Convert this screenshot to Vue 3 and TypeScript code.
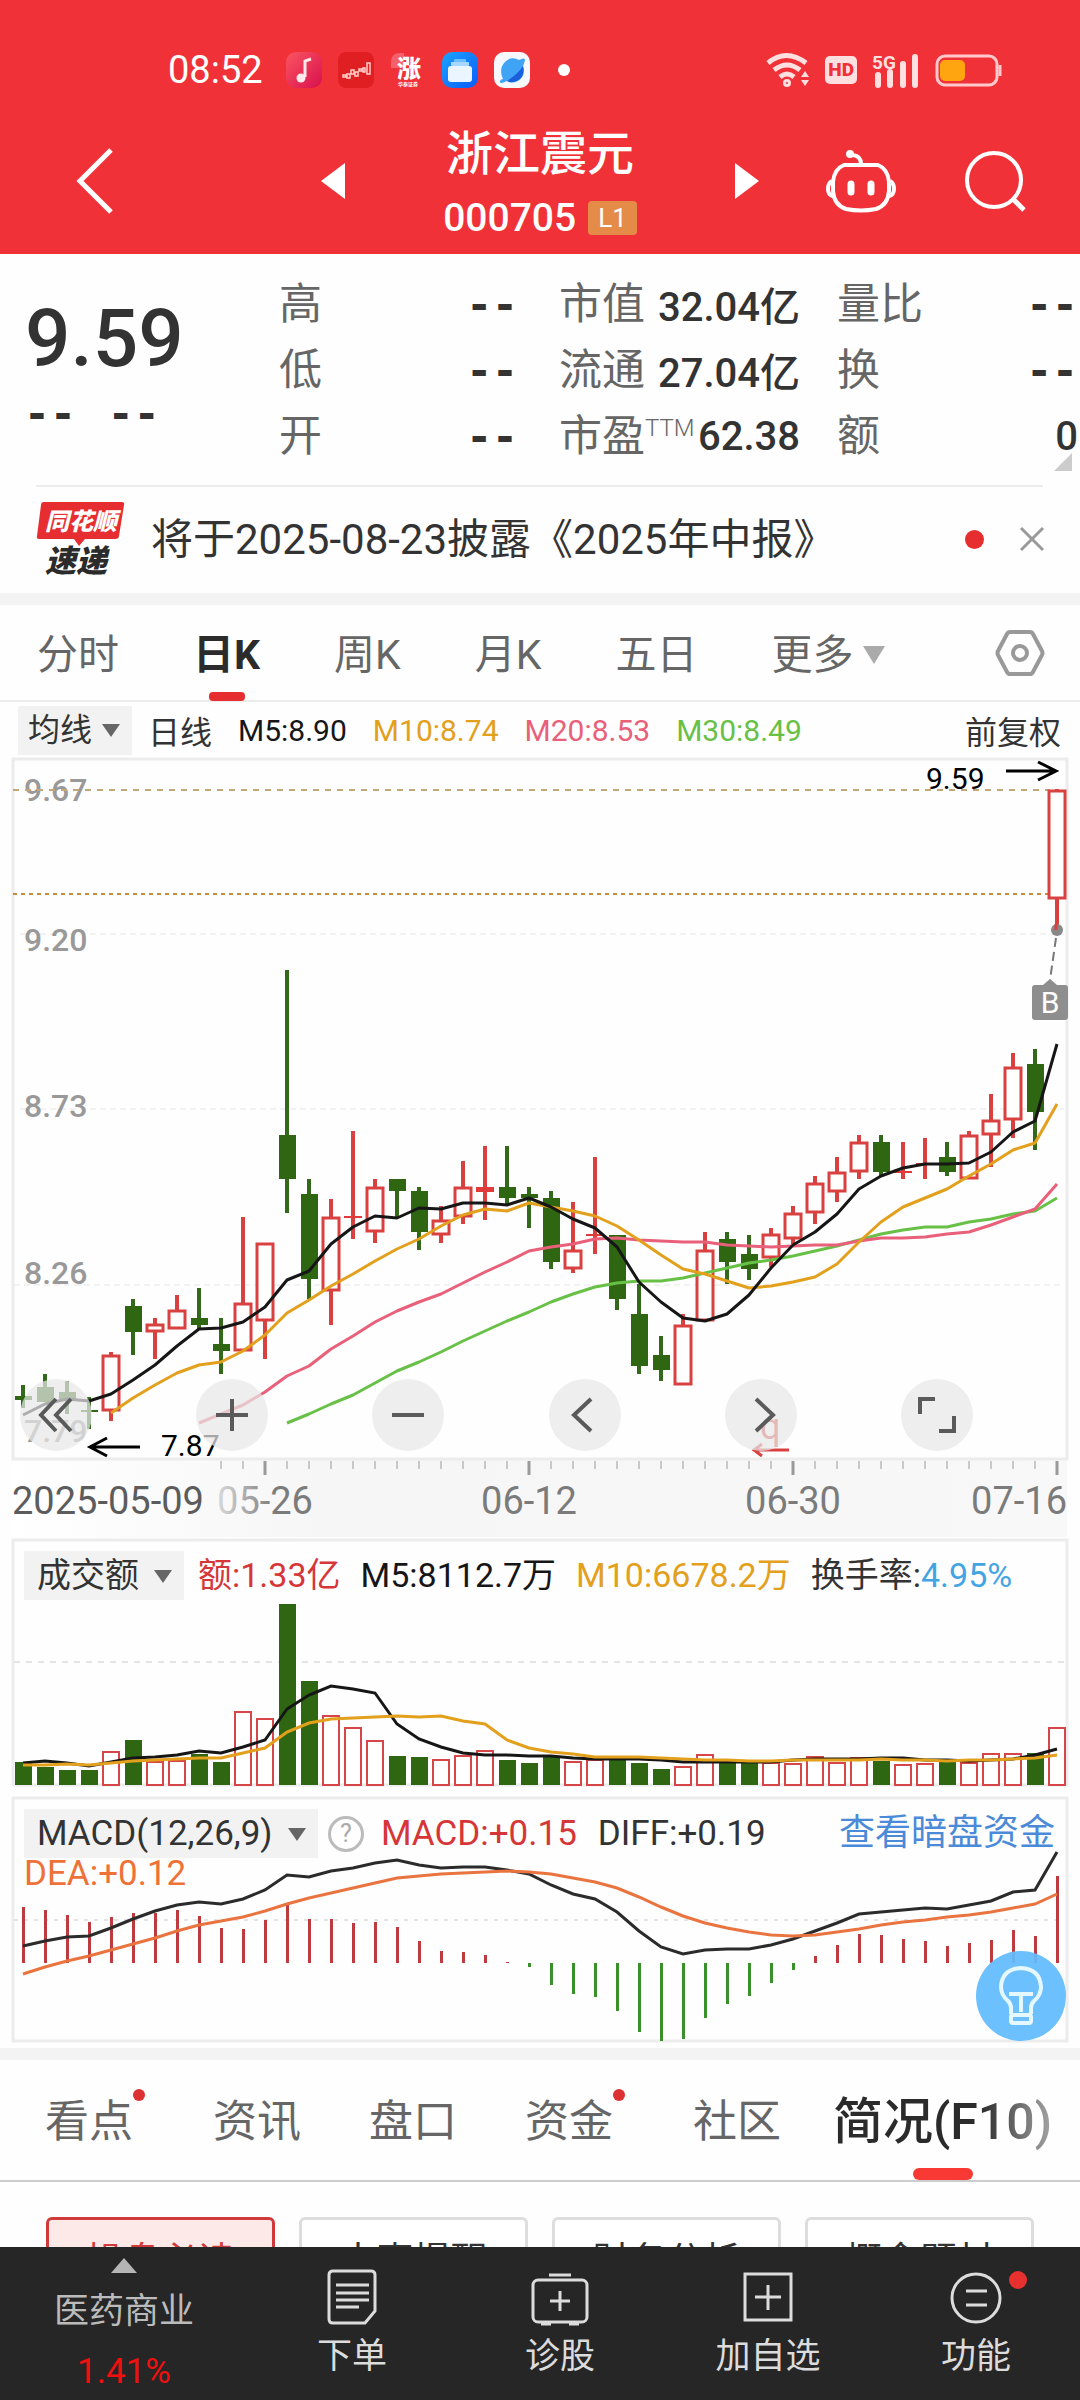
<script setup lang="ts">
interface Candle {
  high: number
  top: number
  bottom: number
  low: number
  up: boolean
}

const STEP = 22
const FIRST = 23
const xAt = (i: number): number => FIRST + i * STEP

const linePoints = (values: number[], start = 0): string =>
  values.map((v, i) => `${xAt(start + i)},${v}`).join(' ')

const parseCandle = (row: string): Candle => {
  const [kind, high, top, bottom, low] = row.split(' ')
  return { up: kind === 'r', high: +high, top: +top, bottom: +bottom, low: +low }
}

const candles: Candle[] = [
  'g 627 638 642 650', 'g 616 629 644 644', 'g 623 634 641 656', 'g 639 652 654 671',
  'r 594 597 653 663', 'g 541 548 574 597', 'r 560 566 574 601', 'r 537 552 571 571',
  'g 530 560 567 571', 'g 560 586 593 616', 'r 459 545 593 593', 'r 485 485 563 601',
  'g 212 377 421 455', 'g 421 436 521 541', 'r 441 459 533 567', 'r 373 458 460 481',
  'r 421 429 474 485', 'g 421 421 433 460', 'g 429 433 474 492', 'r 448 462 477 485',
  'r 403 429 459 466', 'r 388 429 434 462', 'g 388 429 440 447', 'g 429 436 440 470',
  'g 433 440 504 511', 'r 444 492 511 515', 'r 399 476 478 496', 'g 477 477 541 552',
  'g 526 556 608 616', 'g 578 597 612 623', 'r 556 567 627 627', 'r 474 492 563 563',
  'g 474 481 504 526', 'g 477 496 511 522', 'r 470 476 500 509', 'r 448 455 481 486',
  'r 418 425 455 466', 'r 399 414 434 444', 'r 377 384 414 421', 'g 377 384 414 418',
  'r 384 413 415 421', 'r 380 405 407 421', 'g 384 399 414 418', 'r 373 377 421 421',
  'r 336 362 377 409', 'r 295 309 362 380', 'g 291 306 354 392', 'r 31 32 141 171',
].map(parseCandle)

const isFlat = (c: Candle): boolean => c.bottom - c.top < 7

const ma5 = linePoints([
  657, 646, 641, 643, 636, 622, 607, 588, 571, 570, 564, 549, 522, 513, 486, 469, 458, 460, 450, 451,
  445, 445, 447, 440, 449, 461, 470, 489, 524, 544, 560, 563, 556, 537, 510, 487, 474, 456, 431, 418,
  410, 406, 406, 405, 394, 374, 363, 286,
])
const ma10 = linePoints([
  655, 640, 627, 615, 607, 604, 593, 577, 555, 542, 528, 516, 503, 491, 481, 468, 457, 451, 453, 445,
  449, 453, 458, 468, 482, 497, 511, 516, 523, 530, 528, 524, 519, 506, 484, 464, 449, 440, 431, 418,
  406, 392, 385, 346,
], 4)
const ma20 = linePoints([
  665, 656, 647, 634, 618, 608, 591, 578, 564, 553, 544, 536, 525, 514, 504, 493, 489, 486, 481, 480,
  482, 483, 484, 484, 487, 488, 489, 488, 487, 487, 483, 480, 480, 479, 476, 474, 467, 459, 451, 426,
], 8)
const ma30 = linePoints([
  665, 656, 646, 637, 625, 613, 604, 594, 583, 573, 563, 554, 544, 536, 529, 525, 523, 523, 520, 515,
  510, 505, 502, 498, 493, 488, 482, 476, 472, 469, 469, 464, 461, 456, 453, 440,
], 12)

const volumes: number[] = [
  23, 18, 15, 15, 34, 45, 24, 25, 31, 23, 74, 67, 181, 104, 70, 58, 45, 29, 28, 26, 30, 35, 25, 22,
  28, 24, 26, 26, 22, 16, 19, 31, 23, 23, 23, 22, 29, 23, 28, 24, 21, 22, 23, 23, 32, 32, 32, 58,
]
const vol5 = linePoints([
  224, 222, 224, 227, 223, 219, 218, 216, 212, 214, 208, 201, 170, 156, 147, 150, 154, 185, 200, 208,
  214, 216, 216, 217, 217, 219, 220, 220, 220, 221, 223, 223, 223, 223, 223, 221, 220, 220, 220, 219,
  219, 221, 221, 222, 221, 220, 216, 210,
])
const vol10 = linePoints([
  226, 226, 225, 226, 224, 222, 221, 220, 219, 219, 214, 209, 193, 184, 180, 179, 178, 177, 178, 177,
  182, 185, 201, 209, 213, 215, 218, 218, 218, 219, 220, 221, 221, 222, 222, 221, 221, 221, 221, 220,
  221, 221, 222, 221, 221, 220, 219, 216,
])

const macd: number[] = [
  56, 53, 48, 41, 46, 50, 50, 53, 47, 35, 34, 43, 58, 44, 44, 40, 41, 36, 22, 12, 11, 8, 1, -4,
  -22, -31, -34, -48, -69, -78, -76, -55, -41, -33, -20, -7, 7, 18, 29, 28, 24, 22, 17, 20, 23, 33, 27, 87,
]
const diff = linePoints([
  149, 144, 140, 139, 131, 122, 114, 108, 105, 107, 102, 93, 78, 80, 74, 71, 66, 63, 68, 71, 70, 70,
  73, 77, 88, 97, 102, 115, 134, 150, 157, 153, 152, 152, 148, 142, 134, 126, 117, 115, 113, 111, 112,
  108, 104, 95, 93, 55,
])
const dea = linePoints([
  177, 170, 164, 159, 153, 147, 141, 134, 128, 124, 120, 114, 107, 101, 96, 91, 86, 81, 79, 77, 76, 75,
  74, 75, 77, 81, 85, 91, 100, 110, 119, 126, 131, 135, 138, 139, 138, 135, 132, 128, 125, 123, 120,
  118, 115, 111, 107, 97,
])

const ticks = Array.from({ length: 39 }, (_, k) => k + 9)
const isMajor = (i: number): boolean => i % 12 === 11

const priceLabels = [
  { y: 43, text: '9.67' },
  { y: 193, text: '9.20' },
  { y: 359, text: '8.73' },
  { y: 526, text: '8.26' },
  { y: 684, text: '7.79' },
]

const stats = [
  [{ name: '高', value: '--' }, { name: '低', value: '--' }, { name: '开', value: '--' }],
  [{ name: '市值', value: '32.04亿' }, { name: '流通', value: '27.04亿' }, { name: '市盈', sup: 'TTM', value: '62.38' }],
  [{ name: '量比', value: '--' }, { name: '换', value: '--' }, { name: '额', value: '0' }],
] as { name: string; value: string; sup?: string }[][]

const periods = ['分时', '日K', '周K', '月K', '五日']

const sections = [
  { name: '看点', dot: true },
  { name: '资讯' },
  { name: '盘口' },
  { name: '资金', dot: true },
  { name: '社区' },
  { name: '简况(F10)', active: true },
] as { name: string; dot?: boolean; active?: boolean }[]

const shortcuts = ['操盘必读', '大事提醒', '财务分析', '概念题材']
</script>

<template>
  <div class="page">
    <header class="top">
      <div class="status">
        <span class="clock">08:52</span>
        <div class="apps">
          <svg width="36" height="36" viewBox="0 0 36 36">
            <defs>
              <linearGradient id="music" x1="0" y1="0" x2="1" y2="1">
                <stop offset="0" stop-color="#fb5560" />
                <stop offset="1" stop-color="#d8104f" />
              </linearGradient>
              <linearGradient id="files" x1="0" y1="0" x2="1" y2="1">
                <stop offset="0" stop-color="#1aa3ff" />
                <stop offset="1" stop-color="#0a5cff" />
              </linearGradient>
            </defs>
            <rect width="36" height="36" rx="10" fill="url(#music)" />
            <path d="M19 25V9l6-2" fill="none" stroke="#ffe9ea" stroke-width="3" />
            <circle cx="15" cy="26" r="4.500" fill="#ffe9ea" />
          </svg>
          <svg width="36" height="36" viewBox="0 0 36 36">
            <rect width="36" height="36" rx="8" fill="#e01f22" />
            <g fill="none" stroke="#ffd2cc" stroke-width="1.500">
              <rect x="5" y="23" width="3" height="2" /><rect x="9" y="22" width="3" height="4" />
              <rect x="13" y="18" width="3" height="4" /><rect x="17" y="20" width="3" height="4" />
              <rect x="21" y="17" width="3" height="2" /><rect x="25" y="16" width="2" height="4" />
              <rect x="29" y="11" width="3" height="11" />
            </g>
          </svg>
          <svg width="36" height="36" viewBox="0 0 36 36">
            <path d="M1 16V10Q1 1 10 1H14V16Z" fill="#f5616a" />
            <text x="7" y="25" font-size="24" font-weight="900" fill="#fff">涨</text>
            <text x="8" y="34" font-size="5" font-weight="700" fill="#fff">华泰证券</text>
          </svg>
          <svg width="36" height="36" viewBox="0 0 36 36">
            <rect width="36" height="36" rx="10" fill="url(#files)" />
            <rect x="12" y="7" width="12" height="4" rx="1" fill="#6cc0ff" />
            <rect x="9" y="10" width="18" height="4" rx="1" fill="#a6d8ff" />
            <rect x="6" y="14" width="24" height="16" rx="3" fill="#eaf5ff" />
          </svg>
          <svg width="36" height="36" viewBox="0 0 36 36">
            <rect width="36" height="36" rx="10" fill="#f6f8fb" />
            <path d="M9 27Q4 16 12 9Q18 4 25 8Q31 5 31 8Q30 12 29 14Q32 24 24 29Q17 32 13 29Q5 33 6 29Q7 27 9 27Z" fill="#3fa4f5" />
            <path d="M29 14Q24 22 13 29Q20 32 26 27Q31 22 29 14Z" fill="#1a5fdc" />
          </svg>
          <i class="more-dot"></i>
        </div>
        <div class="signals">
          <svg width="44" height="36" viewBox="0 0 44 36" fill="none" stroke="#ffdfe0" stroke-width="5">
            <path d="M2 11Q20-4 40 11M8 18Q21 8 34 18M14 25Q21 19 28 25" />
            <circle cx="21" cy="31" r="1.500" />
            <path d="M35 25l4-6 4 6zM35 28l4 6 4-6z" fill="#ffdfe0" stroke="none" />
          </svg>
          <span class="hd">HD</span>
          <svg width="48" height="36" viewBox="0 0 48 36">
            <text x="0" y="17" font-size="19" font-weight="700" fill="#ffdfe0">5G</text>
            <path d="M6 33V23M18 33V20M31 33V12M43 33V5" stroke="#ffdfe0" stroke-width="6" stroke-linecap="round" />
          </svg>
          <svg width="68" height="36" viewBox="0 0 68 36">
            <rect x="2" y="4" width="60" height="29" rx="8" fill="none" stroke="#ffc9cb" stroke-width="3" />
            <rect x="5" y="8" width="25" height="21" rx="5" fill="#ffa50f" />
            <path d="M65 13v11" stroke="#ffc9cb" stroke-width="3" />
          </svg>
        </div>
      </div>
      <nav class="title-bar">
        <div class="side-left">
          <button aria-label="返回">
            <svg width="38" height="66" viewBox="0 0 38 66"><path d="M35 2L4 33L35 64" fill="none" stroke="#fff" stroke-width="5" /></svg>
          </button>
          <button aria-label="上一只"><svg width="24" height="36" viewBox="0 0 24 36"><path d="M24 0V36L0 18Z" fill="#fff" /></svg></button>
        </div>
        <div class="stock">
          <h1>浙江震元</h1>
          <p><span>000705</span><b>L1</b></p>
        </div>
        <div class="side-right">
          <button aria-label="下一只"><svg width="24" height="36" viewBox="0 0 24 36"><path d="M0 0V36L24 18Z" fill="#fff" /></svg></button>
          <button class="robot" aria-label="智能助手">
            <svg width="70" height="64" viewBox="0 0 70 64" fill="none" stroke="#fff" stroke-width="4">
              <path d="M35 15Q35 7 27 6" stroke-width="4" />
              <circle cx="24" cy="5" r="3" fill="#fff" stroke-width="2" />
              <path d="M18 16H52Q62 20 63 33V42Q62 56 50 60Q35 63 20 60Q8 56 7 42V33Q8 20 18 16Z" />
              <path d="M6 32Q2 34 2 40Q2 46 7 47M64 32Q68 34 68 40Q68 46 63 47" />
              <path d="M25 35v8M45 35v8" stroke-width="7" stroke-linecap="round" />
            </svg>
          </button>
          <button class="search" aria-label="搜索">
            <svg width="62" height="62" viewBox="0 0 62 62" fill="none" stroke="#fff" stroke-width="4">
              <circle cx="30" cy="30" r="27" /><path d="M49 49L60 60" stroke-width="5" />
            </svg>
          </button>
        </div>
      </nav>
    </header>

    <main>
      <section class="quote">
        <div class="price">
          <strong>9.59</strong>
          <p class="dashes"><span>--</span><span>--</span></p>
        </div>
        <dl v-for="(col, c) in stats" :key="c">
          <div v-for="s in col" :key="s.name">
            <dt>{{ s.name }}<sup v-if="s.sup">{{ s.sup }}</sup></dt>
            <dd :class="{ dashes: s.value === '--' }">{{ s.value }}</dd>
          </div>
        </dl>
        <i class="corner"></i>
      </section>

      <section class="notice">
        <svg class="logo" width="90" height="76" viewBox="0 0 90 76">
          <path d="M7 1H86Q89 1 88 4L83 35Q83 38 79 38H49L43 45L38 38H3Q0 38 1 35L5 4Q5 1 8 1Z" fill="#e62e30" />
          <text x="9" y="29" font-size="24" font-weight="900" font-style="italic" fill="#fff">同花顺</text>
          <text x="9" y="71" font-size="31" font-weight="900" font-style="italic" fill="#2b2b2b">速递</text>
        </svg>
        <a href="#">将于2025-08-23披露《2025年中报》</a>
        <i class="red-dot"></i>
        <button aria-label="关闭"><svg width="26" height="26" viewBox="0 0 26 26"><path d="M2 2L24 24M24 2L2 24" stroke="#999" stroke-width="3" /></svg></button>
      </section>

      <nav class="periods">
        <button v-for="p in periods" :key="p" :class="{ on: p === '日K' }">{{ p }}</button>
        <button class="more" aria-haspopup="true">更多<i class="caret light"></i></button>
        <button class="gear" aria-label="设置">
          <svg width="50" height="48" viewBox="0 0 50 48" fill="none" stroke="#999" stroke-width="4">
            <path d="M15 3H35Q37 3 38 5L47 22Q48 24 47 26L38 43Q37 45 35 45H15Q13 45 12 43L3 26Q2 24 3 22L12 5Q13 3 15 3Z" />
            <circle cx="25" cy="24" r="7" />
          </svg>
        </button>
      </nav>

      <div class="ma-row">
        <label class="pick"><select aria-label="主图指标"><option>均线</option></select></label>
        <span class="dark">日线</span>
        <span class="m5">M5:8.90</span>
        <span class="m10">M10:8.74</span>
        <span class="m20">M20:8.53</span>
        <span class="m30">M30:8.49</span>
        <span class="adjust dark">前复权</span>
      </div>

      <section class="kline">
        <svg class="plot" viewBox="0 0 1080 781">
          <defs>
            <linearGradient id="band" x1="0" y1="0" x2="1" y2="0">
              <stop offset="0" stop-color="#fff" />
              <stop offset="0.300" stop-color="#f7f6f7" />
              <stop offset="1" stop-color="#f8f8f8" />
            </linearGradient>
            <linearGradient id="fade" gradientUnits="userSpaceOnUse" x1="215" y1="0" x2="275" y2="0">
              <stop offset="0" stop-color="#ddd" />
              <stop offset="1" stop-color="#7b7b7b" />
            </linearGradient>
          </defs>
          <rect x="13" y="702" width="1054" height="77" fill="url(#band)" />
          <rect x="13" y="1" width="1054" height="700" fill="#fefefe" stroke="#ececec" stroke-width="3" />
          <g fill="none" stroke="#e6e6e6" stroke-width="1" stroke-dasharray="6 4">
            <path d="M20 176H1064M20 351H1064M14 527H1064" />
          </g>
          <g font-size="32" font-weight="500" fill="#999">
            <text v-for="l in priceLabels" :key="l.text" x="24" :y="l.y">{{ l.text }}</text>
          </g>
          <path d="M13 32H1050" stroke="#c2a878" stroke-width="2" stroke-dasharray="6 6" />
          <path d="M13 136H1056" stroke="#c98b3c" stroke-width="2" stroke-dasharray="4 4" />

          <g v-for="(c, i) in candles" :key="i">
            <template v-if="c.up">
              <path :d="`M${xAt(i)} ${c.high}V${c.top}M${xAt(i)} ${c.bottom}V${c.low}`" stroke="#d94040" stroke-width="4" />
              <rect v-if="isFlat(c)" :x="xAt(i) - 9" :y="c.top" width="18" :height="c.bottom - c.top" fill="#e03a3a" />
              <rect v-else :x="xAt(i) - 8" :y="c.top + 1" width="16" :height="c.bottom - c.top - 2" fill="#fff" stroke="#d94040" stroke-width="3" />
            </template>
            <template v-else>
              <path :d="`M${xAt(i)} ${c.high}V${c.low}`" stroke="#33691a" stroke-width="4" />
              <rect :x="xAt(i) - 8" :y="c.top" width="17" :height="c.bottom - c.top" fill="#2e6612" />
            </template>
          </g>

          <g fill="none" stroke-width="3" stroke-linejoin="round">
            <polyline :points="ma30" stroke="#68c047" />
            <polyline :points="ma20" stroke="#e9607a" />
            <polyline :points="ma10" stroke="#e2a01c" />
            <polyline :points="ma5" stroke="#161616" />
          </g>

          <g font-size="30">
            <text x="926" y="31">9.59</text>
            <text x="161" y="698">7.87</text>
          </g>
          <path d="M1006 13H1056M1038 4L1056 13L1038 22M140 689H90M107 680L90 689L107 698" fill="none" stroke="#000" stroke-width="3" />

          <circle cx="1057" cy="172" r="6" fill="#888" />
          <path d="M1056 166V172" stroke="#d94040" stroke-width="3" />
          <path d="M1056 180L1050 222" stroke="#777" stroke-width="2" stroke-dasharray="9 5" />
          <path d="M1043 227L1050 221L1057 227H1065Q1068 227 1068 230V259Q1068 262 1065 262H1035Q1032 262 1032 259V230Q1032 227 1035 227Z" fill="#8e8e8e" />
          <text x="1050" y="255" font-size="30" text-anchor="middle" fill="#fff">B</text>

          <text x="760" y="681" font-size="36" fill="#d94040">q</text>
          <path d="M789 692H754M762 686L754 692L762 698" fill="none" stroke="#d94040" stroke-width="3" />

          <g stroke="#9a9a9a">
            <path v-for="i in ticks" :key="i" :d="`M${xAt(i)} 703V${isMajor(i) ? 717 : 711}`" :stroke-width="isMajor(i) ? 3 : 1" />
          </g>
          <g font-size="38" fill="#7b7b7b">
            <text x="12" y="756" fill="#5c5c5c">2025-05-09</text>
            <text x="265" y="756" text-anchor="middle" fill="url(#fade)">05-26</text>
            <text x="529" y="756" text-anchor="middle">06-12</text>
            <text x="793" y="756" text-anchor="middle">06-30</text>
            <text x="1067" y="756" text-anchor="end">07-16</text>
          </g>
        </svg>
        <div class="tools">
          <button aria-label="最早"><svg width="34" height="34" viewBox="0 0 34 34"><path d="M17 1L2 17L17 33M32 1L17 17L32 33" /></svg></button>
          <button aria-label="放大"><svg width="34" height="34" viewBox="0 0 34 34"><path d="M1 17H33M17 1V33" /></svg></button>
          <button aria-label="缩小"><svg width="34" height="34" viewBox="0 0 34 34"><path d="M1 17H33" /></svg></button>
          <button aria-label="左移"><svg width="34" height="34" viewBox="0 0 34 34"><path d="M23 1L6 17L23 33" /></svg></button>
          <button aria-label="右移"><svg width="34" height="34" viewBox="0 0 34 34"><path d="M12 1L29 17L12 33" /></svg></button>
          <button aria-label="全屏"><svg width="38" height="38" viewBox="0 0 38 38"><path d="M2 18V3H17M36 20V35H21" /></svg></button>
        </div>
      </section>

      <section class="panel volume">
        <svg class="plot" viewBox="0 0 1080 248">
          <rect x="13" y="1" width="1054" height="245" fill="none" stroke="#ececec" stroke-width="3" />
          <path d="M14 123H1064" stroke="#e4e4e4" stroke-width="2" stroke-dasharray="6 6" />
          <g v-for="(v, i) in volumes" :key="i">
            <rect v-if="candles[i].up" :x="xAt(i) - 8" :y="247 - v" width="16" :height="v - 1" fill="#fff" stroke="#d64547" stroke-width="2" />
            <rect v-else :x="xAt(i) - 8" :y="246 - v" width="17" :height="v" fill="#2e6612" />
          </g>
          <polyline :points="vol5" fill="none" stroke="#161616" stroke-width="3" />
          <polyline :points="vol10" fill="none" stroke="#e2a01c" stroke-width="3" />
        </svg>
        <div class="legend">
          <label class="pick"><select aria-label="副图指标一"><option>成交额</option></select></label>
          <span class="red">额:1.33亿</span>
          <span class="m5">M5:8112.7万</span>
          <span class="m10">M10:6678.2万</span>
          <span class="dark">换手率:<em>4.95%</em></span>
        </div>
      </section>

      <section class="panel macd">
        <svg class="plot" viewBox="0 0 1080 246">
          <rect x="13" y="1" width="1054" height="243" fill="none" stroke="#ececec" stroke-width="3" />
          <path d="M14 123H1064" stroke="#e4e4e4" stroke-width="2" stroke-dasharray="4 6" />
          <path v-for="(m, i) in macd" :key="i" :d="`M${xAt(i) + 0.5} 166V${166 - m}`" :stroke="m > 0 ? '#bd3a3e' : '#3a902a'" stroke-width="3" />
          <polyline :points="diff" fill="none" stroke="#2b2b2b" stroke-width="3" />
          <polyline :points="dea" fill="none" stroke="#ea7440" stroke-width="3" />
        </svg>
        <div class="legend">
          <label class="pick"><select aria-label="副图指标二"><option>MACD(12,26,9)</option></select></label>
          <button class="help" aria-label="说明">?</button>
          <span class="red">MACD:+0.15</span>
          <span class="dark diff">DIFF:+0.19</span>
          <a href="#" class="dark-pool">查看暗盘资金</a>
          <span class="dea">DEA:+0.12</span>
        </div>
        <button class="bulb" aria-label="提示">
          <svg width="44" height="60" viewBox="0 0 44 60" fill="none" stroke="#e6f8ff" stroke-width="4">
            <path d="M12 48V42Q12 38 9 35Q2 29 2 21Q3 3 22 2Q41 3 42 21Q42 29 35 35Q32 38 32 42V48" />
            <path d="M10 28H34M22 28V46" />
            <rect x="12" y="49" width="20" height="8" rx="2" />
          </svg>
        </button>
      </section>

      <nav class="sections">
        <button v-for="s in sections" :key="s.name" :class="{ dotted: s.dot, active: s.active }">{{ s.name }}</button>
      </nav>

      <div class="shortcuts">
        <button v-for="(s, i) in shortcuts" :key="s" :class="{ on: i === 0 }">{{ s }}</button>
      </div>
    </main>

    <footer class="bar">
      <button class="industry">
        <i></i>
        <span>医药商业</span>
        <b>1.41%</b>
      </button>
      <button>
        <svg width="60" height="58" viewBox="0 0 60 58" fill="none" stroke="#dcdcdc" stroke-width="3">
          <path d="M11 2H49Q53 2 53 6V42L43 54H11Q7 54 7 50V6Q7 2 11 2Z" />
          <path d="M14 16H47M14 24H47M14 31H47M14 38H37" />
        </svg>
        <span>下单</span>
      </button>
      <button>
        <svg width="60" height="58" viewBox="0 0 60 58" fill="none" stroke="#dcdcdc" stroke-width="3">
          <rect x="3" y="11" width="54" height="42" rx="5" />
          <path d="M19 6H41M30 22V42M20 32H40M11 55H21M39 55H49" />
        </svg>
        <span>诊股</span>
      </button>
      <button>
        <svg width="60" height="58" viewBox="0 0 60 58" fill="none" stroke="#dcdcdc" stroke-width="3">
          <rect x="7" y="5" width="46" height="46" /><path d="M30 16V41M17 28H43" />
        </svg>
        <span>加自选</span>
      </button>
      <button class="functions">
        <svg width="60" height="58" viewBox="0 0 60 58" fill="none" stroke="#dcdcdc" stroke-width="3">
          <circle cx="30" cy="29" r="24" /><path d="M20 22H41M20 36H41" />
        </svg>
        <span>功能</span>
      </button>
    </footer>
  </div>
</template>

<style>
body {
  margin: 0;
  background: #fff;
}
</style>

<style scoped>
.page {
  display: flex;
  flex-direction: column;
  height: 100vh;
  overflow: hidden;
  background: #fefefe;
  color: #333;
  font-family: Roboto, "Noto Sans CJK SC", sans-serif;
}
button,
select {
  font: inherit;
  color: inherit;
  border: 0;
  padding: 0;
  margin: 0;
  background: none;
  border-radius: 0;
}
svg {
  display: block;
  overflow: visible;
}
h1,
p,
dl,
dd {
  margin: 0;
}
a {
  color: inherit;
  text-decoration: none;
}
i,
em {
  font-style: normal;
}

/* header */
.top {
  flex: none;
  background: #f03238;
  color: #fff;
  height: 254px;
}
.status {
  display: flex;
  align-items: center;
  height: 36px;
  padding: 52px 77px 0 168px;
}
.clock {
  width: 118px;
  font-size: 38px;
  line-height: 36px;
}
.apps {
  display: flex;
  align-items: center;
  gap: 16px;
}
.more-dot {
  width: 12px;
  height: 12px;
  margin-left: 12px;
  border-radius: 50%;
  background: #fff;
}
.signals {
  display: flex;
  align-items: center;
  gap: 15px;
  margin-left: auto;
}
.hd {
  padding: 0 3px;
  border-radius: 5px;
  background: #ffdfe0;
  color: #f03238;
  font-size: 19px;
  font-weight: 900;
  line-height: 28px;
}
.title-bar {
  display: grid;
  grid-template-columns: 345fr 390fr 345fr;
  padding-top: 34px;
}
.side-left,
.side-right {
  display: flex;
  align-items: center;
  height: 118px;
}
.side-left {
  justify-content: space-between;
  padding-left: 76px;
}
.robot {
  margin-left: 67px;
}
.search {
  margin: 0 54px 0 auto;
}
.stock {
  display: flex;
  flex-direction: column;
  align-items: center;
}
.stock h1 {
  font-size: 47px;
  font-weight: 500;
  line-height: 64px;
}
.stock p {
  display: flex;
  align-items: center;
  gap: 12px;
}
.stock span {
  font-size: 39px;
  font-weight: 500;
  line-height: 64px;
}
.stock b {
  padding: 0 10px;
  border-radius: 4px;
  background: #e58b48;
  font-size: 26px;
  font-weight: 400;
  line-height: 34px;
}

/* body */
main {
  flex: 1;
  min-height: 0;
  overflow: hidden;
}
.quote {
  position: relative;
  display: grid;
  grid-template-columns: 251fr 239fr 41fr 241fr 37fr 241fr;
  padding: 17px 2px 16px 28px;
}
.quote dl:nth-of-type(2) {
  grid-column: 4;
}
.quote dl:nth-of-type(3) {
  grid-column: 6;
}
.quote dl div {
  display: flex;
  justify-content: space-between;
  align-items: center;
  height: 66px;
  white-space: nowrap;
}
.quote dt {
  color: #666;
  font-size: 43px;
  line-height: 66px;
}
.quote sup {
  font-size: 24px;
  font-weight: 300;
  line-height: 24px;
}
.quote dd {
  font-size: 40px;
  font-weight: 500;
}
.price strong {
  display: block;
  margin-left: -3px;
  font-size: 80px;
  font-weight: 500;
  line-height: 100px;
  padding-top: 18px;
}
.price .dashes {
  display: flex;
  gap: 32px;
  margin-left: -4px;
}
.quote .dashes {
  font-family: "DejaVu Sans Mono", monospace;
  font-size: 43px;
  font-weight: 700;
  line-height: 48px;
}
.corner {
  position: absolute;
  right: 8px;
  bottom: 14px;
  border-left: 18px solid transparent;
  border-bottom: 18px solid #ccc;
}
.notice {
  display: flex;
  align-items: center;
  height: 108px;
  padding-right: 35px;
  margin-left: 36px;
  background: linear-gradient(#ececec, #ececec) 0 0 / calc(100% - 37px) 2px no-repeat;
}
.notice a {
  margin-left: 25px;
  padding-top: 2px;
  font-size: 42px;
  line-height: 60px;
  white-space: nowrap;
}
.red-dot {
  width: 19px;
  height: 19px;
  margin: 0 35px 0 auto;
  border-radius: 50%;
  background: #e62e30;
}
.periods {
  display: flex;
  align-items: center;
  gap: 74px;
  height: 95px;
  padding: 0 35px 0 37px;
  border-top: 12px solid #f3f3f3;
  border-bottom: 2px solid #ececec;
  color: #666;
  font-size: 41px;
}
.periods button {
  position: relative;
  padding-top: 4px;
  line-height: 90px;
  white-space: nowrap;
}
.periods .on {
  color: #2b2b2b;
  font-weight: 700;
}
.periods .on::after {
  content: "";
  position: absolute;
  left: 50%;
  bottom: -1px;
  width: 36px;
  height: 9px;
  margin-left: -18px;
  border-radius: 4px;
  background: #e62e30;
}
.more {
  display: flex;
  align-items: center;
  gap: 9px;
}
.caret.light {
  border: 11px solid transparent;
  border-top: 18px solid #aaa;
  border-bottom: 0;
}
.periods .gear {
  margin-left: auto;
  padding-top: 0;
}
.pick {
  position: relative;
  display: block;
  background: #f2f2f2;
}
.pick select {
  display: block;
  appearance: none;
  color: #333;
}
.pick::after {
  content: "";
  position: absolute;
  right: 12px;
  top: 50%;
  margin-top: -6px;
  border: 9px solid transparent;
  border-top: 13px solid #666;
  border-bottom: 0;
  pointer-events: none;
}
.ma-row {
  display: flex;
  align-items: center;
  gap: 26px;
  height: 56px;
  padding: 0 19px 0 18px;
  font-size: 30px;
  white-space: nowrap;
}
.ma-row .pick {
  margin-right: -10px;
}
.ma-row select {
  height: 49px;
  padding: 0 39px 0 10px;
  line-height: 49px;
}
.ma-row select,
.ma-row .dark {
  font-size: 32px;
}
.adjust {
  margin-left: auto;
}
.dark {
  color: #333;
}
.m5 {
  color: #161616;
}
.m10 {
  color: #e2a01c;
}
.m20 {
  color: #e9607a;
}
.m30 {
  color: #68c047;
}
.red {
  color: #d63638;
}
.plot {
  width: 100%;
  height: auto;
}
.kline {
  position: relative;
}
.tools {
  position: absolute;
  left: 20px;
  right: 107px;
  bottom: 88px;
  display: flex;
  justify-content: space-between;
}
.tools button {
  display: flex;
  align-items: center;
  justify-content: center;
  width: 72px;
  height: 72px;
  border-radius: 50%;
  background: rgba(231, 231, 231, 0.72);
}
.tools path {
  fill: none;
  stroke: #5a5a5a;
  stroke-width: 4;
}
.panel {
  position: relative;
  display: grid;
}
.panel > .plot,
.panel > .legend {
  grid-area: 1 / 1;
}
.panel .legend {
  z-index: 1;
  display: flex;
  flex-wrap: wrap;
  align-items: center;
  align-content: flex-start;
  padding: 12px 25px 0 24px;
  font-size: 34px;
  line-height: 49px;
  white-space: nowrap;
}
.panel select {
  height: 49px;
  padding: 0 45px 0 13px;
}
.volume .legend {
  gap: 20px;
}
.volume .pick {
  margin-right: -6px;
}
.volume em {
  color: #43a4e4;
}
.macd {
  margin-top: 10px;
}
.macd .legend {
  font-size: 35px;
}
.help {
  width: 36px;
  height: 36px;
  margin: 0 17px 0 10px;
  border: 3px solid #bbb;
  border-radius: 50%;
  color: #aaa;
  font-size: 25px;
  line-height: 30px;
}
.diff {
  margin-left: 21px;
}
.dark-pool {
  margin-left: auto;
  color: #4a8ad8;
  font-size: 36px;
}
.dea {
  width: 100%;
  color: #ee7238;
  line-height: 32px;
}
.bulb {
  position: absolute;
  z-index: 2;
  right: 14px;
  bottom: 2px;
  display: flex;
  align-items: center;
  justify-content: center;
  width: 90px;
  height: 90px;
  border-radius: 50%;
  background: rgba(97, 187, 254, 0.93);
}
.sections {
  position: relative;
  display: flex;
  gap: 68px;
  height: 120px;
  margin-top: 5px;
  padding-left: 45px;
  border-top: 12px solid #f3f3f3;
  border-bottom: 2px solid #ccc;
  color: #666;
  font-size: 44px;
  white-space: nowrap;
}
.sections::after {
  content: "";
  position: absolute;
  top: 30px;
  right: 0;
  width: 100px;
  height: 70px;
  background: linear-gradient(90deg, rgba(254, 254, 254, 0), rgba(254, 254, 254, 0.8));
}
.sections button {
  position: relative;
  padding-top: 4px;
  line-height: 116px;
}
.sections .dotted {
  padding-right: 12px;
}
.sections .dotted::after {
  content: "";
  position: absolute;
  top: 29px;
  right: 0;
  width: 12px;
  height: 12px;
  border-radius: 50%;
  background: #dc3032;
}
.sections .active {
  margin-left: -16px;
  color: #2b2b2b;
  font-size: 50px;
  font-weight: 500;
}
.sections .active::after {
  content: "";
  position: absolute;
  left: 50%;
  bottom: 0;
  width: 60px;
  height: 12px;
  margin-left: -30px;
  border-radius: 6px;
  background: #f93a34;
}
.shortcuts {
  display: grid;
  grid-template-columns: repeat(4, 1fr);
  gap: 24px;
  padding: 35px 46px 0;
}
.shortcuts button {
  height: 90px;
  border: 3px solid #ddd;
  border-radius: 6px;
  background: #fff;
  font-size: 37px;
  line-height: 84px;
  white-space: nowrap;
}
.shortcuts .on {
  border-color: #d03a3a;
  background: #fde9e8;
  color: #d03a3a;
}

/* bottom bar */
.bar {
  position: relative;
  flex: none;
  display: grid;
  grid-template-columns: 248fr 208fr 208fr 208fr 208fr;
  height: 153px;
  background: #262626;
  color: #dcdcdc;
  font-size: 35px;
}
.bar button {
  position: relative;
  display: flex;
  flex-direction: column;
  align-items: center;
  padding-top: 22px;
  line-height: 60px;
}
.bar .industry {
  padding-top: 11px;
  color: #bbb;
}
.industry i {
  border: 13px solid transparent;
  border-bottom: 15px solid #b5b5b5;
  border-top: 0;
}
.industry span {
  margin-top: 9px;
}
.industry b {
  color: #f01010;
  font-weight: 400;
}
.functions::after {
  content: "";
  position: absolute;
  top: 24px;
  left: 50%;
  width: 18px;
  height: 18px;
  margin-left: 33px;
  border-radius: 50%;
  background: #e83030;
}
</style>
